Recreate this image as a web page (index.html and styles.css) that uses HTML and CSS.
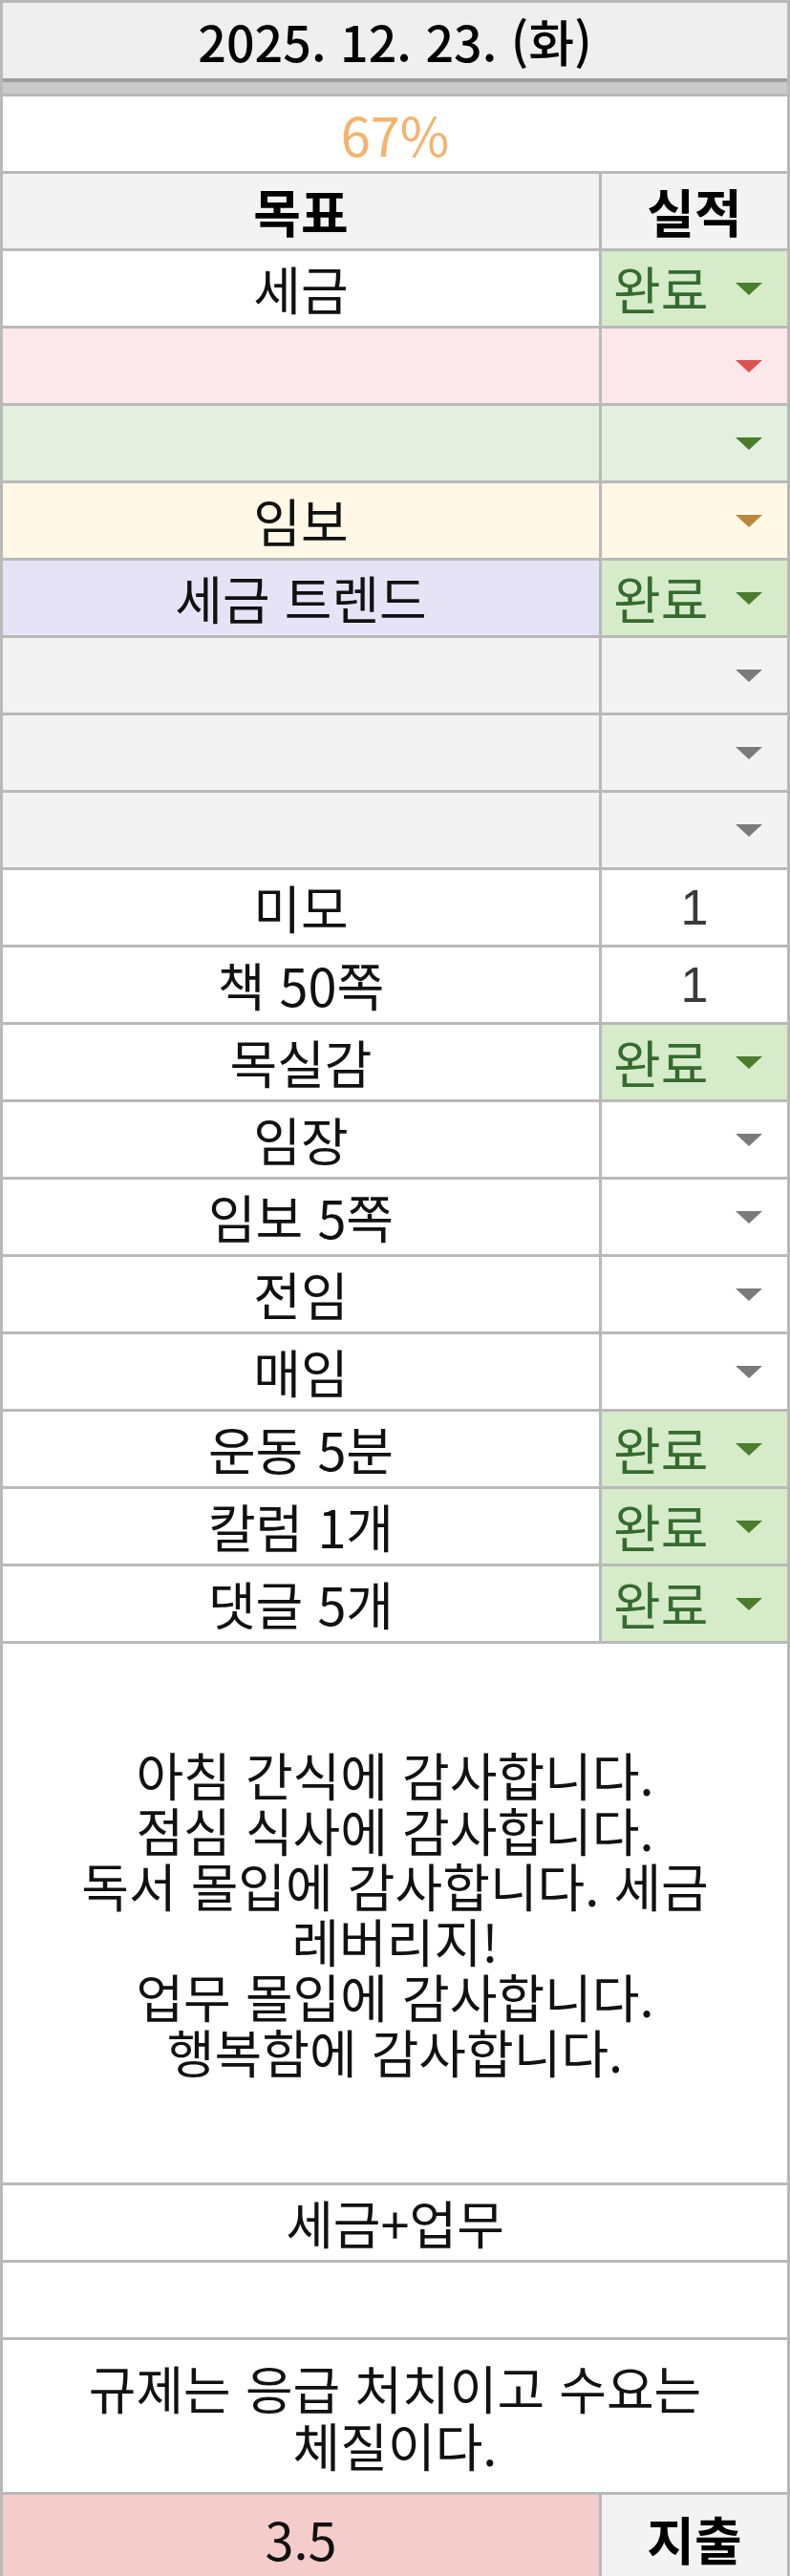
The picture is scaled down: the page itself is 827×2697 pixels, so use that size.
FILE: index.html
```html
<!DOCTYPE html>
<html lang="ko">
<head>
<meta charset="utf-8">
<title>2025. 12. 23. (화)</title>
<link rel="stylesheet" href="styles.css">
</head>
<body>
<div class="sheet">
  <div class="cell span date">2025. 12. 23. (화)</div>
  <div class="span freeze"></div>
  <div class="cell span pct">67%</div>

  <div class="cell head">목표</div>
  <div class="cell head">실적</div>

  <div class="cell">세금</div>
  <div class="cell done">완료<span class="arrow green"></span></div>

  <div class="cell pink"></div>
  <div class="cell pink drop"><span class="arrow red"></span></div>

  <div class="cell mint"></div>
  <div class="cell mint drop"><span class="arrow green"></span></div>

  <div class="cell cream">임보</div>
  <div class="cell cream drop"><span class="arrow brown"></span></div>

  <div class="cell lav">세금 트렌드</div>
  <div class="cell done">완료<span class="arrow green"></span></div>

  <div class="cell grey"></div>
  <div class="cell grey drop"><span class="arrow gray"></span></div>

  <div class="cell grey"></div>
  <div class="cell grey drop"><span class="arrow gray"></span></div>

  <div class="cell grey"></div>
  <div class="cell grey drop"><span class="arrow gray"></span></div>

  <div class="cell">미모</div>
  <div class="cell num">1</div>

  <div class="cell">책 50쪽</div>
  <div class="cell num">1</div>

  <div class="cell">목실감</div>
  <div class="cell done">완료<span class="arrow green"></span></div>

  <div class="cell">임장</div>
  <div class="cell drop"><span class="arrow gray"></span></div>

  <div class="cell">임보 5쪽</div>
  <div class="cell drop"><span class="arrow gray"></span></div>

  <div class="cell">전임</div>
  <div class="cell drop"><span class="arrow gray"></span></div>

  <div class="cell">매임</div>
  <div class="cell drop"><span class="arrow gray"></span></div>

  <div class="cell">운동 5분</div>
  <div class="cell done">완료<span class="arrow green"></span></div>

  <div class="cell">칼럼 1개</div>
  <div class="cell done">완료<span class="arrow green"></span></div>

  <div class="cell">댓글 5개</div>
  <div class="cell done">완료<span class="arrow green"></span></div>

  <div class="cell span multi gratitude">아침 간식에 감사합니다.<br>점심 식사에 감사합니다.<br>독서 몰입에 감사합니다. 세금<br>레버리지!<br>업무 몰입에 감사합니다.<br>행복함에 감사합니다.</div>

  <div class="cell span">세금+업무</div>
  <div class="cell span"></div>

  <div class="cell span multi quote">규제는 응급 처치이고 수요는<br>체질이다.</div>

  <div class="cell spend last">3.5</div>
  <div class="cell head last">지출</div>
</div>
</body>
</html>
```

FILE: styles.css
```css
html, body {
  margin: 0;
  padding: 0;
  background: #ffffff;
}

.sheet {
  width: 827px;
  height: 2697px;
  box-sizing: border-box;
  padding: 3px 3px 0 3px;
  background: #b9b9b9;
  display: grid;
  grid-template-columns: 624px 194px;
  grid-template-rows: 79px 13px;
  grid-auto-rows: minmax(78px, auto);
  gap: 3px;
  align-content: start;
  overflow: hidden;
  font-family: "Noto Sans CJK KR", "Noto Sans", sans-serif;
  color: #111111;
}

.cell {
  background: #ffffff;
  display: flex;
  align-items: center;
  justify-content: center;
  font-size: 54px;
  line-height: 1;
  white-space: nowrap;
  position: relative;
}

.span {
  grid-column: 1 / span 2;
}

.date {
  background: #efefef;
  font-weight: 500;
  font-size: 52px;
  color: #000000;
}

.freeze {
  background: #cacaca;
  border-top: 4px solid #9f9f9f;
  margin-top: -3px;
}

.pct {
  color: #f4b36e;
  font-size: 56px;
}

.head {
  background: #f3f3f3;
  font-weight: 700;
  color: #000000;
}

.pink { background: #fce8ea; }
.mint { background: #e5efe0; }
.cream { background: #fff8e7; }
.lav { background: #e7e3f6; }
.grey { background: #f3f3f3; }

.done {
  background: #d6ebc9;
  color: #356b2f;
  justify-content: flex-start;
  padding-left: 12px;
}

.drop {
  justify-content: flex-end;
}

.num {
  color: #3a3a3a;
  font-family: "Liberation Sans", "Noto Sans CJK KR", sans-serif;
  font-size: 52px;
}

.arrow {
  position: absolute;
  right: 26px;
  top: 50%;
  margin-top: -6px;
  width: 0;
  height: 0;
  border-left: 14px solid transparent;
  border-right: 14px solid transparent;
  border-top: 13px solid #777777;
}

.arrow.green { border-top-color: #4a7d2c; }
.arrow.red { border-top-color: #de5252; }
.arrow.brown { border-top-color: #b8883c; }
.arrow.gray { border-top-color: #7b7b7b; }

.multi {
  text-align: center;
  line-height: 58px;
}

.gratitude {
  grid-row: span 7;
}

.quote {
  grid-row: span 2;
  line-height: 60px;
}

.spend {
  background: #f4cccc;
}

.last {
  min-height: 92px;
}
```
